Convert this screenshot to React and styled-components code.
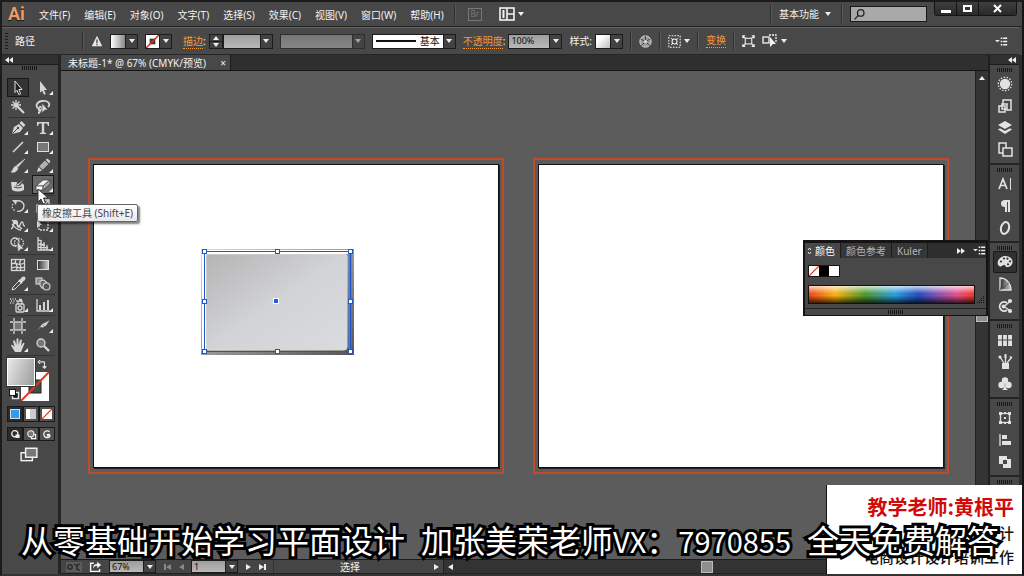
import React, { useState } from "react";
import styled, { createGlobalStyle, css } from "styled-components";

const GlobalStyle = createGlobalStyle`
  * {
    box-sizing: border-box;
  }
  body {
    margin: 0;
    background: #484848;
    color: #f2f2f2;
    font-family: "Noto Sans", "Noto Sans CJK SC", sans-serif;
    font-size: 10px;
    line-height: 14px;
  }
  button, input {
    font: inherit;
    color: inherit;
    margin: 0;
    padding: 0;
  }
  button {
    background: none;
    border: none;
    cursor: pointer;
  }
`;

const Frame = styled.div`
  position: relative;
  display: flex;
  flex-direction: column;
  height: 100vh;
  overflow: hidden;
  background: #484848;
  border: 2px solid #1c1c1c;
  border-right: 2px solid #151515;
  border-bottom-color: #333;
`;

const Divider = styled.span`
  width: 2px;
  height: 18px;
  flex: none;
  background: #2f2f2f;
  border-right: 1px solid #5a5a5a;
`;

const Spacer = styled.div`
  flex: 1;
`;

/* ---------- menu bar ---------- */

const MenuBar = styled.header`
  display: flex;
  align-items: center;
  height: 25px;
  flex: none;
  padding-left: 6px;
  border-bottom: 1px solid #1f1f1f;
  text-shadow: 0 1px 1px #111;
`;

const Logo = styled.span`
  width: 31px;
  color: #f19a63;
  font: bold 18px/20px Roboto, sans-serif;
`;

const Menus = styled.nav`
  display: flex;
  gap: 14px;
  padding-top: 1px;
  margin-right: 10px;
`;

const MenuButton = styled.button`
  white-space: nowrap;
`;

const BridgeButton = styled.button`
  width: 14px;
  height: 13px;
  margin: 0 17px 0 12px;
  border: 1px solid #777;
  color: #777;
  font-size: 8px;
  line-height: 10px;
`;

const IconButton = styled.button`
  display: flex;
  align-items: center;
  gap: 3px;
  flex: none;
  margin: 0 ${(p) => p.$margin || 0}px;
`;

const Workspace = styled.button`
  display: flex;
  align-items: center;
  gap: 6px;
  margin: 0 10px 0 7px;
`;

const Search = styled.label`
  display: flex;
  align-items: center;
  width: 77px;
  height: 16px;
  margin: 0 7px;
  padding-left: 2px;
  background: #a9a9a9;
  border: 1px solid #1a1a1a;
  color: #222;
  input {
    width: 56px;
    background: none;
    border: none;
    outline: none;
  }
`;

const WindowButtons = styled.div`
  display: flex;
  align-self: flex-start;
  height: 14px;
  margin-right: 5px;
  border: 1px solid #141414;
  border-top: none;
  border-radius: 0 0 3px 3px;
`;

const WindowButton = styled.button`
  display: grid;
  place-items: center;
  width: ${(p) => (p.$wide ? 37 : 22)}px;
  background: linear-gradient(#3e3e3e, #2a2a2a);
  border-right: 1px solid #141414;
  &:last-child {
    border-right: none;
  }
`;

/* ---------- control bar ---------- */

const ControlBar = styled.div`
  display: flex;
  align-items: center;
  gap: 7px;
  height: 28px;
  flex: none;
  padding: 0 11px 0 3px;
  margin-right: 3px;
  border-top: 1px solid #666;
  border-bottom: 1px solid #262626;
`;

const BarGrip = styled.span`
  width: 3px;
  height: 17px;
  background: repeating-linear-gradient(#1c1c1c 0 1px, transparent 1px 3px);
`;

const SelectionKind = styled.span`
  width: 60px;
`;

const Field = styled.div`
  display: flex;
  align-items: center;
  gap: 3px;
  margin-left: ${(p) => (p.$indent ? 4 : 0)}px;
`;

const linkText = css`
  color: #f39a3c;
  border-bottom: 1px dotted #f39a3c;
  line-height: 13px;
`;

const FieldLabel = styled.label`
  white-space: nowrap;
  span {
    ${(p) => p.$link && linkText}
  }
`;

const PanelLink = styled.a`
  ${linkText}
  text-decoration: none;
  white-space: nowrap;
`;

const Combo = styled.span`
  display: flex;
  height: 15px;
  border: 1px solid #1c1c1c;
  opacity: ${(p) => (p.$dim ? 0.55 : 1)};
`;

const ComboInput = styled.input`
  width: ${(p) => p.$width}px;
  height: 13px;
  padding-left: 2px;
  background: linear-gradient(#9d9d9d, #b9b9b9);
  border: none;
  border-radius: 0;
  color: #111;
  font-size: 9px;
  outline: none;
`;

const ComboArrow = styled.button`
  display: grid;
  place-items: center;
  width: 12px;
  background: #424242;
  border-left: 1px solid #1c1c1c;
`;

const Triangle = styled.span`
  width: 0;
  height: 0;
  border: 3px solid transparent;
  ${(p) => p.$dir === "down" && "border-top: 4px solid #eee; border-bottom: 0;"}
  ${(p) => p.$dir === "up" && "border-bottom: 4px solid #eee; border-top: 0;"}
  ${(p) => p.$dir === "left" && "border-right: 5px solid #eee; border-left: 0;"}
  ${(p) => p.$dir === "right" && "border-left: 5px solid #eee; border-right: 0;"}
  opacity: ${(p) => (p.$dim ? 0.4 : 1)};
`;

const Spinner = styled.span`
  display: flex;
  flex-direction: column;
  width: 14px;
  height: 15px;
  border: 1px solid #1c1c1c;
  button {
    flex: 1;
    display: grid;
    place-items: center;
    background: #424242;
  }
  button + button {
    border-top: 1px solid #1c1c1c;
  }
`;

const WeightBox = styled.div`
  display: flex;
`;

const Swatch = styled.span`
  display: block;
  width: 14px;
  height: 13px;
  background: ${(p) => p.$fill};
`;

const Profile = styled.button`
  display: flex;
  align-items: center;
  gap: 4px;
  width: 70px;
  padding: 0 3px;
  background: #fff;
  color: #111;
  line-height: 13px;
  &::before {
    content: "";
    flex: 1;
    border-top: 2px solid #111;
  }
`;

/* ---------- work area ---------- */

const Body = styled.div`
  display: flex;
  flex: 1;
  min-height: 0;
`;

const ToolPanel = styled.aside`
  width: 59px;
  flex: none;
  border-right: 3px solid #242424;
`;

const PanelHead = styled.div`
  display: flex;
  justify-content: ${(p) => p.$align};
  align-items: center;
  height: 10px;
  padding: 0 3px;
  background: #303030;
  border-bottom: 1px solid #1c1c1c;
`;

const Grip = styled.div`
  width: 16px;
  height: 4px;
  margin: 1px auto;
  background: repeating-linear-gradient(90deg, #161616 0 1px, #4a4a4a 1px 2px);
`;

const ToolGroups = styled.div`
  padding: 7px 0 0 5px;
`;

const ToolGroup = styled.div`
  display: grid;
  grid-template-columns: 22px 22px;
  column-gap: 3px;
  width: 48px;
  border-bottom: 1px solid #333;
  padding-bottom: 1px;
`;

const ToolButton = styled.button`
  position: relative;
  display: grid;
  place-items: center;
  height: 19px;
  color: #d6d6d6;
  ${(p) =>
    p.$active &&
    css`
      background: #333;
      box-shadow: inset 0 0 0 1px #181818;
    `}
  ${(p) =>
    p.$hover &&
    css`
      background: #6a6a6a;
      box-shadow: inset 0 0 0 1px #181818;
    `}
  &::after {
    content: "";
    display: ${(p) => (p.$more ? "block" : "none")};
    position: absolute;
    right: 1px;
    bottom: 2px;
    border: 2px solid transparent;
    border-right-color: #eee;
    border-bottom-color: #eee;
  }
`;

const Tooltip = styled.span`
  position: absolute;
  z-index: 5;
  left: 5px;
  top: 29px;
  width: 101px;
  height: 18px;
  border: 1px solid #666;
  border-radius: 2px;
  background: linear-gradient(#fff, #e8e8ee);
  box-shadow: 2px 2px 2px rgba(0, 0, 0, 0.5);
  color: #444;
  line-height: 16px;
  white-space: nowrap;
`;

const Cursor = styled.svg`
  position: absolute;
  z-index: 6;
  left: 5px;
  top: 13px;
`;

const FillStroke = styled.div`
  display: grid;
  grid-template-columns: 14px 14px 14px;
  grid-template-rows: 14px 14px 15px;
  margin: 2px 0 5px 5px;
  color: #e4e4e4;
`;

const FillBox = styled.button`
  grid-area: 1 / 1 / 3 / 3;
  z-index: 1;
  background: linear-gradient(110deg, #e8e8e8, #9c9c9c);
  border: 1px solid #fff;
  box-shadow: 0 0 0 1px #333;
`;

const StrokeBox = styled.button`
  grid-area: 2 / 2 / 4 / 4;
  display: block;
  background: #fff;
`;

const Corner = styled.button`
  grid-area: ${(p) => p.$area};
  display: grid;
  place-items: center;
`;

const ModeRow = styled.div`
  display: flex;
  margin: 0 0 5px 5px;
`;

const ModeButton = styled.button`
  display: grid;
  place-items: center;
  width: 16px;
  height: ${(p) => p.$height}px;
  background: ${(p) => (p.$active ? "#2b2b2b" : "#505050")};
  border: 1px solid #1a1a1a;
`;

const ScreenMode = styled.button`
  display: block;
  margin: 4px auto 0 18px;
`;

const Document = styled.main`
  display: flex;
  flex-direction: column;
  flex: 1;
  min-width: 0;
`;

const TabStrip = styled.div`
  display: flex;
  height: 16px;
  flex: none;
  background: #2f2f2f;
  border-bottom: 1px solid #151515;
`;

const DocumentTab = styled.div`
  display: flex;
  align-items: center;
  justify-content: space-between;
  width: 170px;
  padding: 0 4px 0 7px;
  background: #484848;
  border-right: 1px solid #1c1c1c;
  white-space: nowrap;
`;

const CanvasRow = styled.div`
  display: flex;
  flex: 1;
  min-height: 0;
`;

const Canvas = styled.div`
  display: flex;
  flex: 1;
  gap: 29px;
  min-width: 0;
  overflow: hidden;
  padding: 87px 26px 0 27px;
  background: #5c5c5c;
`;

const Bleed = styled.section`
  position: relative;
  flex: none;
  width: 416px;
  height: 316px;
  padding: 4px 3px;
  border: 2px solid #c4492a;
`;

const Artboard = styled.div`
  height: 100%;
  background: #fff;
  border: 1px solid #111;
  box-shadow: 1px 1px 0 #222;
`;

const SelectedPath = styled.svg`
  position: absolute;
  left: 111px;
  top: 89px;
`;

const VerticalScroll = styled.div`
  width: 13px;
  flex: none;
  background: #343434;
  border-left: 1px solid #222;
`;

const ScrollArrow = styled.button`
  display: grid;
  place-items: center;
  width: 12px;
  height: 13px;
`;

const Thumb = styled.div`
  width: 12px;
  height: ${(p) => p.$height}px;
  margin: ${(p) => p.$margin};
  background: #8e8e8e;
  border: 1px solid #bbb;
`;

const StatusBar = styled.footer`
  display: flex;
  align-items: center;
  height: 15px;
  flex: none;
  padding-left: 5px;
  background: #454545;
  border-top: 1px solid #1c1c1c;
  border-bottom: 1px solid #222;
`;

const StatusCombo = styled(Combo)`
  height: 13px;
  margin-right: 8px;
  input {
    height: 11px;
    line-height: 11px;
  }
`;

const StatusNav = styled.span`
  display: flex;
  align-items: center;
  gap: 8px;
  width: 27px;
`;

const StatusText = styled.span`
  flex: none;
  width: 171px;
  display: flex;
  justify-content: space-between;
  align-items: center;
  height: 13px;
  padding: 0 4px 0 66px;
  border-left: 1px solid #333;
  border-right: 1px solid #222;
`;

const HorizontalScroll = styled.div`
  flex: 1;
  display: flex;
  align-items: center;
  height: 13px;
  background: #333;
`;

/* ---------- right dock ---------- */

const Dock = styled.aside`
  width: 34px;
  flex: none;
  border-left: 2px solid #202020;
  border-right: 3px solid #2c2c2c;
`;

const DockGroup = styled.div`
  padding: 2px 0;
  border-bottom: 2px solid #242424;
`;

const DockButton = styled.button`
  display: grid;
  place-items: center;
  width: 24px;
  height: 22px;
  margin: 0 auto;
  color: #e2e2e2;
  border-radius: 2px;
  ${(p) => p.$active && "background: #303030; box-shadow: inset 0 0 0 1px #1a1a1a;"}
`;

const ColorPanel = styled.section`
  position: absolute;
  z-index: 3;
  top: 238px;
  right: 34px;
  width: 185px;
  background: #484848;
  border: 2px solid #141414;
  border-top-width: 3px;
  border-bottom-width: 1px;
`;

const ColorTabs = styled.div`
  display: flex;
  align-items: center;
  height: 15px;
  background: #2e2e2e;
`;

const ColorTab = styled.button`
  display: flex;
  align-items: center;
  gap: 3px;
  height: 15px;
  padding: 0 5px 0 ${(p) => (p.$active ? 2 : 5)}px;
  color: ${(p) => (p.$active ? "#fff" : "#b4b4b4")};
  background: ${(p) => (p.$active ? "#484848" : "#363636")};
  border-right: 1px solid #1c1c1c;
  white-space: nowrap;
`;

const TabTools = styled.span`
  display: flex;
  gap: 8px;
  margin-left: auto;
`;

const SwatchRow = styled.div`
  display: flex;
  width: 32px;
  margin: 7px 0 8px 3px;
  border: 1px solid #151515;
  span {
    width: 10px;
    height: 10px;
  }
`;

const SpectrumRow = styled.div`
  display: flex;
  align-items: flex-end;
  justify-content: space-between;
  padding: 0 1px 4px 3px;
`;

const Spectrum = styled.button`
  width: 167px;
  height: 19px;
  border: 1px solid #111;
  background: linear-gradient(rgba(255, 255, 255, 0.75), rgba(255, 255, 255, 0) 45%, rgba(0, 0, 0, 0) 55%, rgba(0, 0, 0, 0.75)),
    linear-gradient(90deg, #f04a1c, #f9b314 16%, #4f9a2c 34%, #2a9fe0 52%, #2450c0 66%, #8a53b4 78%, #e8508c 90%, #ee3a24);
`;

const PanelFoot = styled.div`
  height: 7px;
  border-top: 1px solid #222;
`;

/* ---------- video captions ---------- */

const TeacherCard = styled.div`
  position: absolute;
  z-index: 7;
  right: -2px;
  bottom: -2px;
  width: 198px;
  height: 91px;
  padding: 8px 10px 0 0;
  background: #fff;
  border-left: 1px solid #111;
  color: #111;
  font: 500 15px/24px "Noto Sans CJK SC", sans-serif;
  text-align: right;
  white-space: nowrap;
  p {
    margin: 0;
  }
`;

const TeacherName = styled.p`
  color: #d00a0a;
  font-size: 20px;
  font-weight: bold;
  line-height: 28px;
`;

const Subtitle = styled.p`
  position: absolute;
  z-index: 8;
  left: 19px;
  bottom: 14px;
  display: flex;
  align-items: baseline;
  gap: 16px;
  margin: 0;
  color: #fff;
  font: 32px/40px "Noto Sans CJK SC", sans-serif;
  white-space: nowrap;
  -webkit-text-stroke: 6px #000;
  paint-order: stroke fill;
  stroke-linejoin: round;
`;

const HalfWidth = styled.span`
  font-size: 29px;
`;

const s = { fill: "none", stroke: "currentColor", strokeWidth: 1.3 };

const glyphs = {
  select: <path d="M5 1l7 8.5H8.8l1.9 4.3-1.8.8L7 10.300 5 12.500z" fill="#222" stroke="#ddd" />,
  direct: <path d="M5 1l7 9H9l1.800 4-1.800.8L7.200 10.800 5 12.800z" fill="currentColor" />,
  wand: (
    <g {...s}>
      <path d="M7 7l7 7" strokeWidth="2.200" />
      <path d="M6 1v10M1 6h10M2.500 2.500l7 7M9.500 2.500l-7 7" />
    </g>
  ),
  lasso: (
    <g {...s}>
      <path d="M4 10C0 8 1 3 7 2s9 3 6 6M4 8c2-1 4 1 2 3s-3-1-1-2M5 11c0 2-1 3-2 3" strokeWidth="1.800" />
      <path d="M7 4l6 7h-3l-3 3z" fill="currentColor" stroke="#444" strokeWidth=".6" />
    </g>
  ),
  pen: (
    <g>
      <path d="M2 14L4 7l5-3 4 4-3 4z" fill="currentColor" />
      <path d="M9.500 3l2-2 4 4-2 2z" fill="currentColor" />
      <path d="M2.500 13.500L8 8" stroke="#444" />
      <circle cx="8" cy="8" r="1.200" fill="#444" />
    </g>
  ),
  type: <path d="M2 2h12v4h-1l-1-2.500H9.200V12.500l2 .6v.9H4.800v-.9l2-.6V3.500H4L3 6H2z" fill="currentColor" />,
  line: <path d="M3 13L13 3" {...s} strokeWidth="1.600" />,
  rect: <rect x="2.500" y="3.500" width="11" height="9" fill="#777" stroke="#ddd" />,
  brush: (
    <path d="M15 1L8 9 6.500 7.500zM6 8l2 2c-1 4-4 5-7 4 2-1 2-5 5-6z" fill="currentColor" stroke="currentColor" strokeWidth=".6" />
  ),
  pencil: (
    <g fill="currentColor">
      <path d="M2 14l1.500-5L7 12.500z" />
      <path d="M4.200 8.300L10 2.500 13.500 6 7.700 11.800z" opacity=".75" />
      <path d="M10.800 1.800l1-1q1 0 2 1l1 1q1 1 0 1.600l-.8.8z" />
    </g>
  ),
  blob: (
    <g>
      <path d="M1 5h6q-1 2 1 4 3 0 4-3l2 2v5q-6 3-12 0z" fill="currentColor" />
      <path d="M15 1L9 6q-2 0-3 3 3 0 4-2z" fill="currentColor" stroke="#444" strokeWidth=".6" />
      <path d="M4 10q4 2 8 0" fill="none" stroke="#444" />
    </g>
  ),
  eraser: (
    <g stroke="#333" strokeWidth=".7">
      <path d="M1 9l7-6h7l-7 6z" fill="#eee" />
      <path d="M1 9h7v4H1z" fill="#fff" />
      <path d="M8 9l7-6v4l-7 6z" fill="#aaa" />
    </g>
  ),
  rotate: (
    <g {...s}>
      <path d="M5 4c4-3 9 0 9 4 0 4-4 6-7 5" />
      <path d="M3 6c-2 3 0 6 3 7" strokeDasharray="1.500 1.500" />
      <path d="M2 2l5 0-1 5z" fill="currentColor" stroke="none" />
    </g>
  ),
  scale: (
    <g {...s}>
      <rect x="2" y="7" width="7" height="7" />
      <path d="M6 2h8v9M9 7l4-4" />
    </g>
  ),
  warp: (
    <g {...s}>
      <path d="M1 12c3-1 2-8 5-8s0 5 2 6 2-5 4-5 0 4 3 4M2 3l10 9M2 7c2 2 4 6 9 6" />
      <circle cx="5" cy="5" r="1.500" fill="currentColor" />
    </g>
  ),
  transform: (
    <g {...s}>
      <rect x="4" y="4" width="9" height="9" strokeDasharray="2 1" />
      <path d="M2 2l5 6H5L2 11z" fill="currentColor" stroke="none" />
    </g>
  ),
  shapeBuilder: (
    <g {...s}>
      <circle cx="5" cy="6" r="4" />
      <circle cx="9" cy="7" r="4.500" strokeDasharray="1.500 1" />
      <path d="M7 5l7 8h-3l-3 3z" fill="currentColor" stroke="#444" strokeWidth=".6" />
    </g>
  ),
  perspective: <path d="M3 1v13h12M6 4v10M9 6v8M12 9v5M3 4l4 1M3 8l7 1M3 11l10 1" {...s} />,
  mesh: (
    <g {...s}>
      <rect x="1.500" y="2.500" width="13" height="11" />
      <path d="M2 7c3-3 6 3 12-1M2 11c4-3 7 2 12-1M6 3c-3 3 4 6 0 10M11 3c-4 3 2 6-1 10" />
    </g>
  ),
  gradient: <rect x="2.500" y="3.500" width="11" height="9" fill="url(#toolGradient)" stroke="#ddd" />,
  dropper: (
    <g>
      <path d="M2 14l1-3 6-6 2 2-6 6z" {...s} strokeWidth="1" />
      <path d="M8 4l2-.500 2-2.500q2-1 3 0t0 3l-2.500 2-.5 2z" fill="currentColor" />
    </g>
  ),
  blend: (
    <g {...s} strokeWidth="1.100">
      <rect x="1" y="2" width="6" height="6" fill="#888" />
      <path d="M5 5l4-1 3 3-1 4-4 1-2-3z" fill="#666" />
      <circle cx="11.500" cy="10.500" r="3.500" fill="#555" />
    </g>
  ),
  spray: (
    <g {...s}>
      <rect x="6" y="7" width="8" height="8" rx="1" />
      <circle cx="10" cy="11" r="2" />
      <path d="M8 7V4h4v3M9 2.500h3" />
      <path d="M0 2h6M1 4h6M0 6h5" strokeDasharray="1 1.500" />
    </g>
  ),
  graph: (
    <g>
      <path d="M2 2v12h13" {...s} />
      <path d="M4 8h2v5H4zM8 5h2v8H8zM12 3h2v10h-2z" fill="currentColor" />
    </g>
  ),
  artboard: (
    <g {...s}>
      <rect x="4" y="4" width="8" height="8" fill="#777" />
      <path d="M4 0v3M12 0v3M4 13v3M12 13v3M0 4h3M0 12h3M13 4h3M13 12h3" />
    </g>
  ),
  slice: <path d="M1 14l6-8 8-4-4 6-4 2-1-1zM8 7l2 2" fill="currentColor" stroke="#444" strokeWidth=".5" />,
  hand: (
    <path
      d="M5 15L1 8.500q1-1.500 2 0l1.500 1.500L3 4q1-1.500 2 0l1.500 4V2q1-1.500 2 0v6l1.500-5q1-1.200 2 0l-1 6 2-3q1.500-.8 1.500.5L11 15z"
      fill="currentColor"
    />
  ),
  zoom: (
    <g {...s}>
      <circle cx="6" cy="6" r="4" fill="#777" />
      <path d="M9 9l5 5" strokeWidth="2.400" />
    </g>
  ),
  glow: (
    <g {...s}>
      <circle cx="8" cy="8" r="4.500" fill="currentColor" />
      <circle cx="8" cy="8" r="6.700" strokeDasharray="1.500 1.500" />
    </g>
  ),
  styles: (
    <g {...s} strokeWidth="1.500">
      <path d="M6 7V2h8v10H9" />
      <rect x="2" y="8" width="6" height="6" />
      <rect x="5" y="6" width="5" height="5" />
    </g>
  ),
  layers: (
    <g fill="currentColor">
      <path d="M8 1l7 4-7 4-7-4z" />
      <path d="M1 9.500l2-1.200 5 2.700 5-2.700 2 1.200-7 4.500z" />
    </g>
  ),
  artboards: (
    <g {...s} strokeWidth="1.500">
      <rect x="2" y="1" width="7" height="10" />
      <rect x="6" y="6" width="9" height="8" fill="#484848" />
    </g>
  ),
  character: (
    <g {...s} strokeWidth="1.700">
      <path d="M2 13L6 3l4 10M3.500 9.500h5" />
      <path d="M13.500 2v12" strokeWidth="1" />
    </g>
  ),
  paragraph: <path d="M8 9Q4 9 4 5.500T8 2h5v12h-2V4h-1v10H8z" fill="currentColor" />,
  opentype: <ellipse cx="8" cy="8" rx="4" ry="6" {...s} strokeWidth="2" transform="rotate(16 8 8)" />,
  palette: (
    <g>
      <path d="M8 2c5 0 8 3 7.500 6.500-.3 3-3 5-5.500 4.500-2 0-1-2-3-2s-2 2-4 1.500S0 9.500 1 7s4-5 7-5z" fill="currentColor" />
      <g fill="#303030">
        <circle cx="4" cy="7.500" r="1.100" />
        <circle cx="7" cy="4.500" r="1.100" />
        <circle cx="10.500" cy="4.700" r="1.100" />
        <circle cx="13" cy="7.300" r="1.100" />
        <circle cx="11" cy="10.300" r="1.100" />
      </g>
    </g>
  ),
  guide: (
    <g {...s}>
      <path d="M3 2v12h11C14 7 9 2 3 2z" fill="url(#toolGradient)" />
      <path d="M3 14L7 3M3 14l9-7" strokeWidth=".5" stroke="#333" />
    </g>
  ),
  kuler: (
    <g {...s} strokeWidth="1.800">
      <path d="M10 12A4.500 4.500 0 1 1 10 5" />
      <path d="M7 8.500l6-5M7 8.500l6 4" strokeWidth="1.300" />
      <circle cx="13" cy="3" r="1.200" fill="currentColor" />
      <circle cx="13" cy="13" r="1.200" fill="currentColor" />
      <circle cx="6.500" cy="8.500" r="1" fill="currentColor" />
    </g>
  ),
  swatches: (
    <g fill="currentColor">
      <path d="M1 3h14v11H1z" />
      <path d="M1 8h14M5.500 3v11M10.500 3v11" stroke="#484848" strokeWidth="1.200" />
    </g>
  ),
  brushes: (
    <g fill="currentColor">
      <path d="M5 9h7v6H5z" />
      <path d="M7 9L3 3M8.500 9V2M10 9l4-5" {...s} />
      <circle cx="3" cy="3" r="1.600" />
      <path d="M7.500 0h2v4h-2zM12.500 2l3 1-2 3z" />
    </g>
  ),
  symbols: (
    <g fill="currentColor">
      <circle cx="8" cy="4.500" r="3.200" />
      <circle cx="4.500" cy="9" r="3.200" />
      <circle cx="11.500" cy="9" r="3.200" />
      <path d="M8 6l1 6 2 2H5l2-2z" />
    </g>
  ),
  bounds: (
    <g {...s}>
      <rect x="3.500" y="3.500" width="9" height="9" />
      <path d="M2 2h3v3H2zM11 2h3v3h-3zM2 11h3v3H2zM11 11h3v3h-3zM7 2h2v2H7zM7 12h2v2H7z" fill="currentColor" stroke="none" />
      <path d="M7 8h2" strokeWidth="2" />
    </g>
  ),
  align: (
    <g>
      <path d="M3 2v12" {...s} />
      <path d="M5 3h5v4H5zM5 9h9v4H5z" fill="currentColor" />
    </g>
  ),
  pathfinder: (
    <g fill="currentColor">
      <path d="M2 2h8v3h4v9H6v-4H2z" />
      <path d="M6 6h4v4H6z" fill="#484848" />
    </g>
  ),
  warning: (
    <g>
      <path d="M8 1l7 14H1z" fill="#e8e8e8" />
      <path d="M8 6v5M8 12v1.500" stroke="#333" strokeWidth="1.600" />
    </g>
  ),
  layout: (
    <g {...s} strokeWidth="1.600">
      <rect x="1" y="2" width="14" height="12" />
      <path d="M8 2v12M8 8h7" />
      <path d="M3.500 4h2v8h-2z" fill="currentColor" stroke="none" />
    </g>
  ),
  recolor: (
    <g>
      <circle cx="8" cy="8" r="7" fill="#999" stroke="#eee" />
      <path d="M8 8V1M8 8l6-3M8 8l5 5M8 8l-5 5M8 8L2 5" stroke="#333" />
      <circle cx="8" cy="8" r="2" fill="#ddd" />
    </g>
  ),
  alignTo: (
    <g {...s}>
      <rect x="1" y="1" width="14" height="14" strokeDasharray="2 1.500" />
      <circle cx="8" cy="8" r="3" />
      <path d="M4 4l2 2M12 4l-2 2M4 12l2-2M12 12l-2-2" />
    </g>
  ),
  isolate: (
    <g {...s}>
      <rect x="4" y="4" width="8" height="7" />
      <path d="M1 1l3 3M15 1l-3 3M1 14l3-3M15 14l-3-3M1 4V1h3M12 1h3v3M1 11v3h3M12 14h3v-3" />
    </g>
  ),
  similar: (
    <g {...s}>
      <rect x="1" y="4" width="6" height="6" />
      <path d="M7 2h7v8" strokeDasharray="2 1" />
      <path d="M8 4l6 7h-3l-3 3z" fill="currentColor" stroke="none" />
    </g>
  ),
  menu: (
    <g {...s} strokeWidth="1.600">
      <path d="M7 4h2M10 4h5M7 8h2M10 8h5M7 12h2M10 12h5" />
      <path d="M0 6h6L3 9z" fill="currentColor" stroke="none" />
    </g>
  ),
  search: (
    <g {...s} strokeWidth="1.600">
      <circle cx="9.500" cy="6" r="4" />
      <path d="M6.500 9L2 14" />
    </g>
  ),
  swap: <path d="M5 3h6q1 0 1 1v8M5 0L2 3l3 3M9 10l3 3 3-3" {...s} strokeWidth="1.800" />,
  defaults: (
    <g {...s}>
      <rect x="6" y="6" width="8" height="8" fill="#111" strokeWidth="2" />
      <rect x="2" y="2" width="8" height="8" fill="#fff" stroke="#111" />
    </g>
  ),
  drawNormal: (
    <g>
      <circle cx="7" cy="7" r="4.500" {...s} strokeWidth="1.800" />
      <path d="M8 8h6v5H8z" fill="currentColor" />
    </g>
  ),
  drawBehind: (
    <g {...s} strokeWidth="1.600">
      <path d="M8 8h6v6H8z" />
      <circle cx="7" cy="7" r="4.500" fill="#777" />
    </g>
  ),
  drawInside: (
    <g>
      <path d="M11 4a5 5 0 1 0 1 6" {...s} strokeWidth="1.800" />
      <path d="M7 7h5v4H7z" fill="currentColor" />
    </g>
  ),
  screens: (
    <g {...s}>
      <rect x="1" y="6" width="10" height="7" />
      <rect x="5" y="2" width="10" height="8" fill="#777" />
    </g>
  ),
  share: (
    <g {...s} strokeWidth="1.800">
      <path d="M6 4H2v10h11v-3" />
      <path d="M5 10q0-5 5-5V2l5 4-5 4V7q-3 0-5 3z" fill="currentColor" strokeWidth="0" />
    </g>
  ),
  links: (
    <g>
      <path d="M0 3h16v10H0z" fill="#5c5c5c" />
      <circle cx="4" cy="8" r="2.200" fill="none" stroke="#2c2c2c" strokeWidth="1.500" />
      <path d="M8 5l3 2v4M10 10l4 1M11 6l3-1" fill="none" stroke="#2c2c2c" strokeWidth="1.500" />
    </g>
  ),
};

const Icon = ({ name, size = 16 }) => (
  <svg width={size} height={size} viewBox="0 0 16 16" aria-hidden="true">
    <defs>
      <linearGradient id="toolGradient">
        <stop offset="0" stopColor="#333" />
        <stop offset="1" stopColor="#ccc" />
      </linearGradient>
    </defs>
    {glyphs[name]}
  </svg>
);

const NoneSwatch = ({ size = 13, ring }) => (
  <svg width={size} height={size} viewBox="0 0 14 14" aria-hidden="true">
    <rect width="14" height="14" fill="#fff" />
    {ring && <rect x="4.500" y="4.500" width="5" height="5" fill="#484848" stroke="#222" />}
    <path d="M0 14L14 0" stroke="#dc2c10" strokeWidth="1.600" />
  </svg>
);

const DoubleArrow = ({ dir = "left" }) => (
  <svg width="8" height="6" viewBox="0 0 8 6" aria-hidden="true">
    <path d={dir === "left" ? "M4 0v6L0 3zM8 0v6L4 3z" : "M0 0v6l4-3zM4 0v6l4-3z"} fill="#eee" />
  </svg>
);

const menus = ["文件(F)", "编辑(E)", "对象(O)", "文字(T)", "选择(S)", "效果(C)", "视图(V)", "窗口(W)", "帮助(H)"];

const toolGroups = [
  ["select", "direct", "wand", "lasso"],
  ["pen", "type", "line", "rect", "brush", "pencil", "blob", "eraser"],
  ["rotate", "scale", "warp", "transform", "shapeBuilder", "perspective"],
  ["mesh", "gradient", "dropper", "blend"],
  ["spray", "graph"],
  ["artboard", "slice", "hand", "zoom"],
];

const singleTools = ["select", "wand", "lasso", "blob", "mesh", "gradient", "blend", "artboard", "zoom"];

const dockGroups = [
  ["glow", "styles", "layers", "artboards"],
  ["character", "paragraph", "opentype"],
  ["palette", "guide", "kuler"],
  ["swatches", "brushes", "symbols"],
  ["bounds", "align", "pathfinder"],
  [],
];

const handles = [
  [3, 3],
  [76, 3],
  [149, 3],
  [3, 53],
  [149, 53],
  [3, 103],
  [76, 103],
  [149, 103],
];

const Arrow = ({ label, dim }) => (
  <ComboArrow aria-label={label}>
    <Triangle $dir="down" $dim={dim} />
  </ComboArrow>
);

const TopMenu = () => (
  <MenuBar>
    <Logo>Ai</Logo>
    <Menus>
      {menus.map((item) => (
        <MenuButton key={item}>{item}</MenuButton>
      ))}
    </Menus>
    <Divider />
    <BridgeButton>Br</BridgeButton>
    <IconButton aria-label="排列文档">
      <Icon name="layout" />
      <Triangle $dir="down" />
    </IconButton>
    <Spacer />
    <Divider />
    <Workspace>
      基本功能
      <Triangle $dir="down" />
    </Workspace>
    <Divider />
    <Search>
      <Icon name="search" size={13} />
      <input type="text" aria-label="搜索" />
    </Search>
    <WindowButtons>
      <WindowButton aria-label="最小化">
        <svg width="10" height="10">
          <path d="M0 6h10v3H0z" fill="#fff" />
        </svg>
      </WindowButton>
      <WindowButton aria-label="最大化">
        <svg width="10" height="9">
          <rect x="1" y="2" width="7" height="5" fill="none" stroke="#fff" strokeWidth="2" />
        </svg>
      </WindowButton>
      <WindowButton $wide aria-label="关闭">
        <svg width="9" height="9">
          <path d="M1 1l7 7M8 1L1 8" stroke="#fff" strokeWidth="2" />
        </svg>
      </WindowButton>
    </WindowButtons>
  </MenuBar>
);

const Controls = () => {
  const [opacity, setOpacity] = useState("100%");
  const [weight, setWeight] = useState("");

  return (
    <ControlBar>
      <BarGrip />
      <SelectionKind>路径</SelectionKind>
      <Divider />
      <IconButton aria-label="警告">
        <Icon name="warning" size={12} />
      </IconButton>
      <Combo>
        <Swatch $fill="linear-gradient(90deg, #fff, #888)" />
        <Arrow label="填色" />
      </Combo>
      <Combo>
        <NoneSwatch ring />
        <Arrow label="描边颜色" />
      </Combo>
      <Field $indent>
        <FieldLabel $link htmlFor="weight">
          <span>描边</span>:
        </FieldLabel>
        <WeightBox>
          <Spinner>
            <button aria-label="增加">
              <Triangle $dir="up" />
            </button>
            <button aria-label="减少">
              <Triangle $dir="down" />
            </button>
          </Spinner>
          <Combo>
            <ComboInput id="weight" $width={36} value={weight} onChange={(e) => setWeight(e.target.value)} />
            <Arrow label="描边粗细" />
          </Combo>
        </WeightBox>
      </Field>
      <Combo $dim>
        <ComboInput $width={71} aria-label="变量宽度" disabled />
        <Arrow label="变量宽度配置" />
      </Combo>
      <Combo>
        <Profile>基本</Profile>
        <Arrow label="画笔定义" />
      </Combo>
      <Field>
        <FieldLabel $link htmlFor="opacity">
          <span>不透明度</span>:
        </FieldLabel>
        <Combo>
          <ComboInput id="opacity" $width={40} value={opacity} onChange={(e) => setOpacity(e.target.value)} />
          <Arrow label="不透明度" />
        </Combo>
      </Field>
      <Field>
        <FieldLabel as="span">样式:</FieldLabel>
        <Combo>
          <Swatch $fill="linear-gradient(135deg, #fff 30%, #bbb)" />
          <Arrow label="图形样式" />
        </Combo>
      </Field>
      <Divider />
      <IconButton aria-label="重新着色">
        <Icon name="recolor" size={13} />
      </IconButton>
      <Divider />
      <IconButton aria-label="对齐">
        <Icon name="alignTo" size={13} />
        <Triangle $dir="down" />
      </IconButton>
      <Divider />
      <PanelLink href="#transform">变换</PanelLink>
      <Divider />
      <IconButton aria-label="隔离">
        <Icon name="isolate" size={13} />
      </IconButton>
      <IconButton aria-label="选择类似的对象">
        <Icon name="similar" />
        <Triangle $dir="down" />
      </IconButton>
      <Spacer />
      <IconButton aria-label="面板菜单">
        <Icon name="menu" size={13} />
      </IconButton>
    </ControlBar>
  );
};

const Tools = () => {
  const [tool, setTool] = useState("select");

  return (
    <ToolPanel>
      <PanelHead $align="flex-start">
        <DoubleArrow />
      </PanelHead>
      <Grip />
      <ToolGroups>
        {toolGroups.map((group) => (
          <ToolGroup key={group[0]}>
            {group.map((name) => (
              <ToolButton
                key={name}
                aria-label={name}
                $active={tool === name}
                $hover={name === "eraser"}
                $more={!singleTools.includes(name)}
                onClick={() => setTool(name)}
              >
                <Icon name={name} />
                {name === "eraser" && (
                  <>
                    <Tooltip>橡皮擦工具 (Shift+E)</Tooltip>
                    <Cursor width="12" height="18" viewBox="0 0 12 18">
                      <path d="M1 1v13l3-3 2 5 2.500-1-2-5H11z" fill="#fff" stroke="#333" />
                    </Cursor>
                  </>
                )}
              </ToolButton>
            ))}
          </ToolGroup>
        ))}
      </ToolGroups>
      <FillStroke>
        <FillBox aria-label="填色" />
        <StrokeBox aria-label="描边">
          <svg width="28" height="29" viewBox="0 0 28 29">
            <rect x="8" y="8" width="12" height="13" fill="#484848" stroke="#222" />
            <path d="M0 29L28 0" stroke="#e03a1c" strokeWidth="2" />
          </svg>
        </StrokeBox>
        <Corner $area="1 / 3" aria-label="互换填色和描边">
          <Icon name="swap" size={10} />
        </Corner>
        <Corner $area="3 / 1" aria-label="默认填色和描边">
          <Icon name="defaults" size={12} />
        </Corner>
      </FillStroke>
      <ModeRow>
        <ModeButton $height={16} $active aria-label="颜色">
          <svg width="10" height="10">
            <rect x=".5" y=".5" width="9" height="9" fill="#2f9cf4" stroke="#ddd" />
          </svg>
        </ModeButton>
        <ModeButton $height={16} aria-label="渐变">
          <svg width="10" height="10">
            <rect width="10" height="10" fill="#ccc" />
            <path d="M0 0h4v10H0z" fill="#fff" />
          </svg>
        </ModeButton>
        <ModeButton $height={16} aria-label="无">
          <NoneSwatch size={10} />
        </ModeButton>
      </ModeRow>
      <ModeRow>
        <ModeButton $height={14} $active aria-label="正常绘图">
          <Icon name="drawNormal" size={11} />
        </ModeButton>
        <ModeButton $height={14} aria-label="背面绘图">
          <Icon name="drawBehind" size={11} />
        </ModeButton>
        <ModeButton $height={14} aria-label="内部绘图">
          <Icon name="drawInside" size={11} />
        </ModeButton>
      </ModeRow>
      <ScreenMode aria-label="更改屏幕模式">
        <Icon name="screens" size={18} />
      </ScreenMode>
    </ToolPanel>
  );
};

const GradientCard = () => (
  <SelectedPath width="153" height="107">
    <defs>
      <linearGradient id="metal" x2="1" y2="1">
        <stop offset="0" stopColor="#b4b4b4" />
        <stop offset=".5" stopColor="#d2d3d6" />
        <stop offset="1" stopColor="#dadbde" />
      </linearGradient>
      <linearGradient id="metalEdge" x2="1" y2="1">
        <stop offset="0" stopColor="#d8d8d8" />
        <stop offset=".5" stopColor="#999" />
        <stop offset="1" stopColor="#555" />
      </linearGradient>
    </defs>
    <rect width="153" height="106" fill="url(#metalEdge)" />
    <rect x="5" y="5" width="141" height="96" rx="3" fill="url(#metal)" stroke="#ddd8cc" />
    <path d="M3 103V3h146" fill="none" stroke="#fff" strokeWidth="4" />
    <path d="M149 5v98" stroke="#4a7ce0" strokeWidth="3" />
    <path d="M3.500 2.500h146v100H3.500z" fill="none" stroke="#1f57c8" />
    {handles.map(([x, y]) => (
      <rect key={`${x}-${y}`} x={x - 1.5} y={y - 2.5} width="4" height="4" fill="#fff" stroke="#1f57c8" />
    ))}
    <rect x="72.500" y="49.500" width="5" height="5" fill="#1f5fe0" stroke="#fff" />
  </SelectedPath>
);

const Status = () => {
  const [zoom, setZoom] = useState("67%");
  const [page, setPage] = useState("1");

  return (
    <StatusBar>
      <Icon name="links" />
      <IconButton aria-label="共享" $margin={7}>
        <Icon name="share" size={13} />
      </IconButton>
      <StatusCombo>
        <ComboInput $width={33} aria-label="缩放" value={zoom} onChange={(e) => setZoom(e.target.value)} />
        <Arrow label="缩放级别" />
      </StatusCombo>
      <StatusNav>
        <svg width="7" height="6">
          <path d="M0 0h2v6H0zM7 0v6L2 3z" fill="#888" />
        </svg>
        <Triangle $dir="left" $dim />
      </StatusNav>
      <StatusCombo>
        <ComboInput $width={33} aria-label="画板" value={page} onChange={(e) => setPage(e.target.value)} />
        <Arrow label="画板导航" />
      </StatusCombo>
      <StatusNav>
        <Triangle $dir="right" />
        <svg width="7" height="6">
          <path d="M0 0v6l5-3zM5 0h2v6H5z" fill="#eee" />
        </svg>
      </StatusNav>
      <StatusText>
        选择
        <Triangle $dir="right" />
      </StatusText>
      <HorizontalScroll>
        <ScrollArrow aria-label="向左滚动">
          <Triangle $dir="left" />
        </ScrollArrow>
        <Thumb $height={12} $margin="0 0 0 45%" />
      </HorizontalScroll>
    </StatusBar>
  );
};

const ColorPicker = () => (
  <ColorPanel>
    <ColorTabs>
      <ColorTab $active>
        <svg width="5" height="8" aria-hidden="true">
          <path d="M1 3l1.500-2L4 3M1 5l1.500 2L4 5" fill="none" stroke="#eee" />
        </svg>
        颜色
      </ColorTab>
      <ColorTab>颜色参考</ColorTab>
      <ColorTab>Kuler</ColorTab>
      <TabTools>
        <IconButton aria-label="折叠">
          <DoubleArrow dir="right" />
        </IconButton>
        <IconButton aria-label="颜色菜单">
          <Icon name="menu" size={13} />
        </IconButton>
      </TabTools>
    </ColorTabs>
    <SwatchRow>
      <NoneSwatch size={10} />
      <Swatch $fill="#000" />
      <Swatch $fill="#fff" />
    </SwatchRow>
    <SpectrumRow>
      <Spectrum aria-label="色谱" />
      <svg width="8" height="8" aria-hidden="true">
        <path d="M6 0h1v1H6zM4 2h1v1H4zM6 2h1v1H6zM2 4h1v1H2zM4 4h1v1H4zM6 4h1v1H6zM0 6h1v1H0zM2 6h1v1H2zM4 6h1v1H4zM6 6h1v1H6z" fill="#151515" />
      </svg>
    </SpectrumRow>
    <PanelFoot>
      <Grip />
    </PanelFoot>
  </ColorPanel>
);

const App = () => (
  <Frame>
    <GlobalStyle />
    <TopMenu />
    <Controls />
    <Body>
      <Tools />
      <Document>
        <TabStrip>
          <DocumentTab>
            未标题-1* @ 67% (CMYK/预览)
            <button aria-label="关闭文档">×</button>
          </DocumentTab>
        </TabStrip>
        <CanvasRow>
          <Canvas>
            <Bleed>
              <Artboard />
              <GradientCard />
            </Bleed>
            <Bleed>
              <Artboard />
            </Bleed>
          </Canvas>
          <VerticalScroll>
            <ScrollArrow aria-label="向上滚动">
              <Triangle $dir="up" />
            </ScrollArrow>
            <Thumb $height={24} $margin="214px 0 0" />
          </VerticalScroll>
        </CanvasRow>
        <Status />
      </Document>
      <Dock>
        <PanelHead $align="flex-end">
          <DoubleArrow />
        </PanelHead>
        {dockGroups.map((group, i) => (
          <DockGroup key={i}>
            <Grip />
            {group.map((name) => (
              <DockButton key={name} aria-label={name} $active={name === "palette"}>
                <Icon name={name} />
              </DockButton>
            ))}
          </DockGroup>
        ))}
      </Dock>
    </Body>
    <ColorPicker />
    <TeacherCard>
      <TeacherName>教学老师:黄根平</TeacherName>
      <p>平面设计</p>
      <p>电商设计设计培训工作</p>
    </TeacherCard>
    <Subtitle>
      <span>从零基础开始学习平面设计</span>
      <span>
        加张美荣老师<HalfWidth>VX</HalfWidth>：<HalfWidth>7970855</HalfWidth>
      </span>
      <span>全天免费解答</span>
    </Subtitle>
  </Frame>
);

export default App;
